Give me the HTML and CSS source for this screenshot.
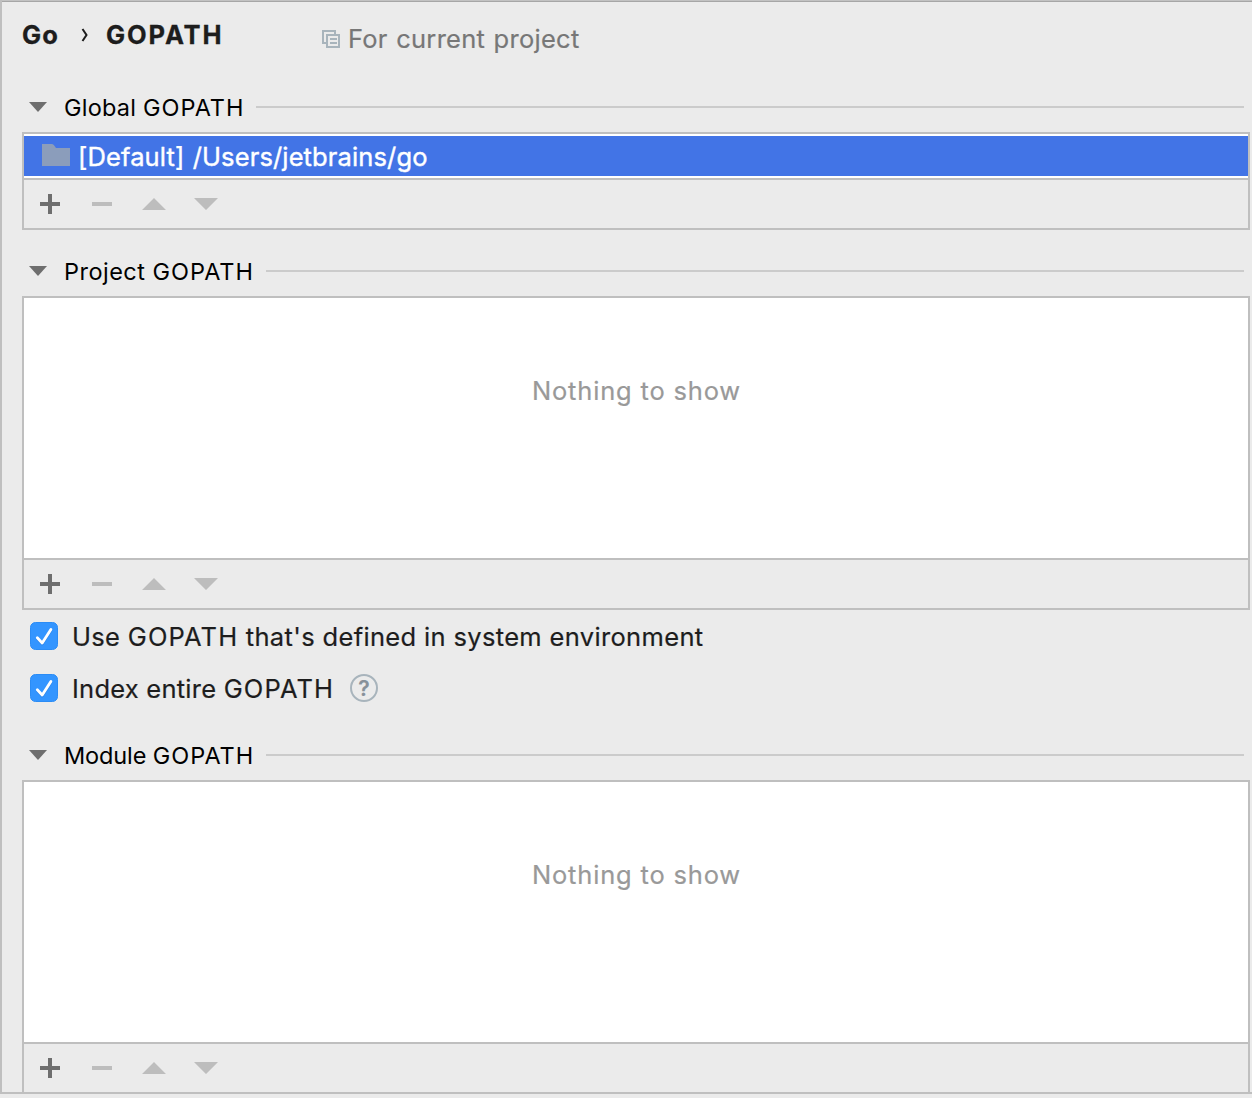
FILE: index.html
```html
<!DOCTYPE html>
<html lang="en">
<head>
<meta charset="utf-8">
<title>GOPATH</title>
<link rel="stylesheet" href="styles.css">
</head>
<body>
<svg width="0" height="0" class="defs">
  <symbol id="tools" viewBox="0 0 200 48">
    <path fill="#6e6e6e" d="M24 14h4v8h8v4h-8v8h-4v-8h-8v-4h8z"/>
    <path fill="#bdbdbd" d="M68 22h20v4H68zM118 30l12-12 12 12zM170 18h24l-12 12z"/>
  </symbol>
  <symbol id="fold" viewBox="0 0 18 10"><path fill="#6e6e6e" d="M0 0h18L9 10z"/></symbol>
  <symbol id="check" viewBox="0 0 28 28">
    <rect x=".5" y=".5" width="27" height="27" rx="5" fill="#3395ff" stroke="#2b8cf5"/>
    <path d="M7.3 15.8l4.9 5.2 8.7-13.6" transform="translate(0 1)" fill="none" stroke="#1d6fd0" stroke-opacity=".45" stroke-width="2.8" stroke-linecap="round" stroke-linejoin="round"/>
    <path d="M7.3 15.8l4.9 5.2 8.7-13.6" fill="none" stroke="#fff" stroke-width="2.8" stroke-linecap="round" stroke-linejoin="round"/>
  </symbol>
</svg>
<main class="panel">
  <header class="header">
    <span class="crumb crumb-go">Go</span>
    <svg class="chevron" width="8" height="14" viewBox="0 0 8 14"><path d="M1.5 1l4 6-4 6" fill="none" stroke="#1d1d1d" stroke-width="2"/></svg>
    <span class="crumb crumb-page">GOPATH</span>
    <svg class="copy" width="18" height="18" viewBox="0 0 18 18"><path fill="none" stroke="#a8b4bc" stroke-width="2" d="M4 13H1V1h12v3M5 5h12v12H5zM8 9h7M8 13h7"/></svg>
    <span class="scope">For current project</span>
  </header>

  <section class="group">
    <h2 class="title"><svg class="fold" width="18" height="10"><use href="#fold"/></svg><span class="t-global">Global <b>GOPATH</b></span></h2>
    <div class="box">
      <div class="list">
        <div class="row">
          <svg width="28" height="22" viewBox="0 0 28 22"><path fill="#8b9dbb" d="M0 0h9.5q1.5 0 2.5 1.3L14 4h14v18H0z"/></svg>
          <span class="path">[Default] /Users/jetbrains/go</span>
        </div>
      </div>
      <div class="toolbar"><svg width="200" height="48"><use href="#tools"/></svg></div>
    </div>
  </section>

  <section class="group project">
    <h2 class="title"><svg class="fold" width="18" height="10"><use href="#fold"/></svg><span class="t-project">Project <b>GOPATH</b></span></h2>
    <div class="box">
      <div class="empty"><span>Nothing to show</span></div>
      <div class="toolbar"><svg width="200" height="48"><use href="#tools"/></svg></div>
    </div>
    <div class="options">
      <label class="option"><svg width="28" height="28"><use href="#check"/></svg><span class="o-system">Use <b>GOPATH</b> that's defined in system environment</span></label>
      <label class="option"><svg width="28" height="28"><use href="#check"/></svg><span class="o-index">Index entire <b>GOPATH</b></span><span class="help">?</span></label>
    </div>
  </section>

  <section class="group module">
    <h2 class="title"><svg class="fold" width="18" height="10"><use href="#fold"/></svg><span class="t-module">Module <b>GOPATH</b></span></h2>
    <div class="box">
      <div class="empty"><span>Nothing to show</span></div>
      <div class="toolbar"><svg width="200" height="48"><use href="#tools"/></svg></div>
    </div>
  </section>
</main>
</body>
</html>
```
FILE: styles.css
```css
* { box-sizing: border-box; }
body {
  margin: 0;
  height: 1098px;
  overflow: hidden;
  background: #ebebeb;
  color: #1d1d1d;
  font: 25.5px/32px Inter, "Liberation Sans", sans-serif;
  white-space: nowrap;
}
svg { display: block; flex: none; }
b { font-weight: inherit; }
.defs { position: absolute; }
.panel {
  height: 1094px;
  border-left: 2px solid #bfbfbf;
  border-bottom: 2px solid #bfbfbf;
  padding: 0 2px 0 20px;
  box-shadow: inset 0 1px #c2c2c2, inset 0 2px #a6a6a6;
}
.header { display: flex; height: 90px; padding-top: 19px; }
.crumb { font-weight: 700; -webkit-text-stroke: 0.3px #1d1d1d; }
.crumb-go { width: 59px; letter-spacing: 1px; }
.chevron { margin-top: 9px; }
.crumb-page { width: 216px; margin-left: 17px; letter-spacing: 1.9px; }
.copy { margin-top: 11px; }
.scope { margin: 4px 0 0 8px; color: #777; letter-spacing: 0.27px; word-spacing: 1px; -webkit-text-stroke: 0.2px #777; }
.title {
  display: flex;
  align-items: center;
  height: 34px;
  margin: 0 6px 8px 0;
  padding-left: 7px;
  color: #000;
  font-size: 23.5px;
  font-weight: 400;
}
.title span { margin: 1px 12px 0 17px; }
.title b { letter-spacing: 0.96px; }
.title .t-global { letter-spacing: 0.22px; }
.title .t-project { letter-spacing: 0.48px; }
.title .t-module { letter-spacing: -0.12px; }
.title::after { content: ""; flex: 1; height: 2px; background: #cbcbcb; }
.box { border: 2px solid #bfbfbf; }
.list { padding: 2px 0; background: #fff; }
.row {
  display: flex;
  height: 40px;
  padding: 8px 18px;
  background: #4274e6;
  color: #fff;
}
.path { margin: -3px 0 0 8px; letter-spacing: 0.13px; word-spacing: 1px; -webkit-text-stroke: 0.4px #fff; }
.toolbar { height: 50px; border-top: 2px solid #bfbfbf; }
.empty {
  height: 260px;
  padding: 77px 0 0 1px;
  background: #fff;
  color: #999;
  text-align: center;
  letter-spacing: 0.82px;
  -webkit-text-stroke: 0.2px #999;
}
.project { padding-top: 24px; }
.module { padding-top: 24px; }
.options { height: 104px; padding: 12px 0 0 8px; }
.option { display: flex; height: 52px; -webkit-text-stroke: 0.2px; }
.option > span { margin: -1px 0 0 14px; }
.option b { letter-spacing: 1.1px; }
.option .o-system { letter-spacing: 0.34px; }
.option .o-index { letter-spacing: 0.24px; }
.option .help {
  width: 28px;
  height: 28px;
  margin: 0 0 0 16px;
  border: 2px solid #a8b4bc;
  border-radius: 50%;
  color: #87919a;
  font-size: 21px;
  font-weight: 600;
  line-height: 25px;
  text-align: center;
}
```
